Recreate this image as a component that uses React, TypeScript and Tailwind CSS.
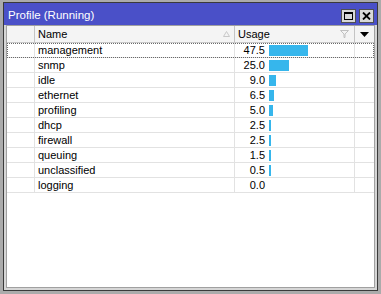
import React from "react";

const rows = [
  { name: "management", usage: 47.5 },
  { name: "snmp", usage: 25.0 },
  { name: "idle", usage: 9.0 },
  { name: "ethernet", usage: 6.5 },
  { name: "profiling", usage: 5.0 },
  { name: "dhcp", usage: 2.5 },
  { name: "firewall", usage: 2.5 },
  { name: "queuing", usage: 1.5 },
  { name: "unclassified", usage: 0.5 },
  { name: "logging", usage: 0.0 },
];

function barWidth(v: number) {
  if (v <= 0) return 0;
  return Math.max(2, Math.floor(v * 0.825));
}

export default function App() {
  return (
    <div
      className="w-[381px] h-[294px] bg-[#ababab] pt-[2px] pl-[3px] pr-[3px] pb-[3px] text-[11px] text-black"
      style={{ fontFamily: '"Liberation Sans", Arial, sans-serif' }}
    >
      <div className="w-full h-full border border-[#3a3a3a] bg-[#d6d6d6] flex flex-col">
        {/* Title bar */}
        <div className="h-[22px] bg-[#4a50c8] flex items-center pl-[4px] pr-[3px]">
          <span className="flex-1 text-white text-[11.5px] leading-none pt-[3px]">Profile (Running)</span>
          <div className="flex gap-[3px] mt-[4px]">
            <div className="w-[15px] h-[14px] bg-[#d8d8d8] border border-[#505050] flex items-center justify-center">
              <div className="w-[9px] h-[8px] border border-black border-t-2" />
            </div>
            <div className="w-[15px] h-[14px] bg-[#d8d8d8] border border-[#505050] flex items-center justify-center">
              <svg width="9" height="8" viewBox="0 0 9 8">
                <path d="M1 0.5 L8 7.5 M8 0.5 L1 7.5" stroke="black" strokeWidth="1.8" />
              </svg>
            </div>
          </div>
        </div>

        {/* Content panel */}
        <div className="flex-1 px-[2px] pb-[2px]">
          <div className="w-full h-full border border-[#a0a0a0] bg-white flex flex-col">
            {/* Header */}
            <div className="flex h-[17px] bg-[#f4f4f4] border-b border-[#c8c8c8]">
              <div className="w-[28px] border-r border-[#c4c4c4]" />
              <div className="w-[200px] border-r border-[#c4c4c4] flex items-center pl-[3px] pr-[4px]">
                <span className="flex-1">Name</span>
                <svg width="7" height="6" viewBox="0 0 7 6">
                  <path d="M3.5 0.5 L6.5 5.5 L0.5 5.5 Z" fill="none" stroke="#c8c8c8" strokeWidth="1" />
                </svg>
              </div>
              <div className="w-[120px] border-r border-[#c4c4c4] flex items-center pl-[3px] pr-[5px]">
                <span className="flex-1">Usage</span>
                <svg width="9" height="8" viewBox="0 0 9 8">
                  <path d="M0.5 0.5 L8.5 0.5 L5 4 L5 7.5 L4 7.5 L4 4 Z" fill="none" stroke="#c0c0c0" strokeWidth="1" />
                </svg>
              </div>
              <div className="flex-1 flex items-center justify-center">
                <svg width="9" height="5" viewBox="0 0 9 5">
                  <path d="M0 0 L9 0 L4.5 5 Z" fill="black" />
                </svg>
              </div>
            </div>

            {/* Rows */}
            {rows.map((r, i) => {
              const w = barWidth(r.usage);
              return (
                <div
                  key={r.name}
                  className={
                    "flex h-[15px] border-b border-[#e2e2e2] leading-[14px] " +
                    (i === 0 ? "outline-1 outline-dotted outline-[#6a6a6a] -outline-offset-1" : "")
                  }
                >
                  <div className="w-[28px] border-r border-[#e2e2e2]" />
                  <div className="w-[200px] border-r border-[#e2e2e2] pl-[3px]">{r.name}</div>
                  <div className="w-[120px] border-r border-[#e2e2e2] flex items-center">
                    <span className="w-[30px] text-right">{r.usage.toFixed(1)}</span>
                    {w > 0 && (
                      <div className="ml-[4px] h-[11px] bg-[#36b6ec]" style={{ width: w }} />
                    )}
                  </div>
                  <div className="flex-1" />
                </div>
              );
            })}
          </div>
        </div>
      </div>
    </div>
  );
}
